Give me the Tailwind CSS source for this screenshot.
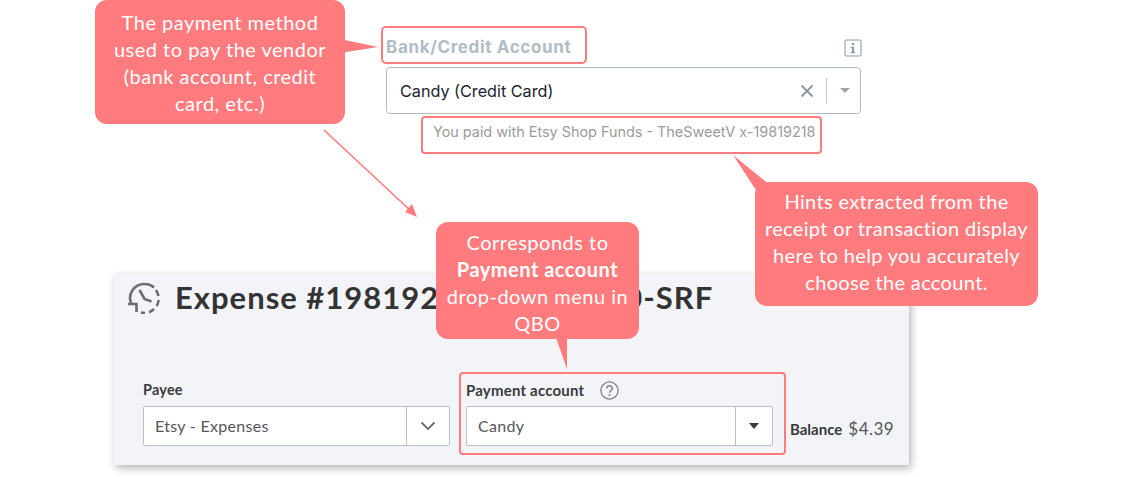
<!DOCTYPE html>
<html lang="en">
<head>
    <meta charset="UTF-8">
    <title>Bank/Credit Account</title>
    <script src="https://cdn.jsdelivr.net/npm/@tailwindcss/browser@4"></script>
</head>
<body class="bg-white">
    <div class="relative w-[1133px] h-[477px] overflow-hidden bg-white font-['Lato',sans-serif]">

        <!-- form from the app -->
        <div class="pt-[26px] ml-[386px] w-[475px] font-['Inter',sans-serif]">
            <div class="flex justify-between items-end h-[38px]">
                <div class="-ml-[5px] w-[206px] h-[38px] border-2 border-[#ff7b7e] rounded-[5px] pl-[3px] pt-[6px] flex items-center text-[17px] font-bold tracking-[0.65px] text-[#b1bdc3] whitespace-nowrap">Bank/Credit Account</div>
                <svg class="mb-[7px] mr-[-1px]" width="18" height="18" viewBox="0 0 18 18" fill="none">
                    <rect x="1" y="1" width="16" height="16" rx="2" stroke="#b1bdc3" stroke-width="1.6"/>
                    <rect x="7.8" y="3.8" width="2.4" height="2.4" fill="#8f9da4"/>
                    <path d="M6.8 7.8h3.2v5h1.2v1.4H6.8v-1.4H8V9.2H6.8z" fill="#8f9da4"/>
                </svg>
            </div>
            <div class="mt-[3px] h-[47px] border border-[#b1bdc1] rounded-[4px] flex items-center pl-[13px] text-[16.2px] text-[#1c2430]">
                <span class="flex-1 pt-[2px]">Candy (Credit Card)</span>
                <svg width="14" height="14" viewBox="0 0 14 14" fill="none"><path d="M1.5 1.5l11 11M12.5 1.5l-11 11" stroke="#8a969c" stroke-width="1.8"/></svg>
                <div class="ml-[12px] w-px h-[25px] bg-[#c3cbcf]"></div>
                <div class="ml-[13px] mr-[10px] w-0 h-0 border-x-[5px] border-x-transparent border-t-[5px] border-t-[#9aa5aa]"></div>
            </div>
            <div class="mt-[2px] ml-[35px] w-[401px] h-[38px] border-2 border-[#ff7b7e] rounded-[4px] pl-[10px] pb-[7px] flex items-center text-[14.4px] text-[#9b9b9b] whitespace-nowrap">You paid with Etsy Shop Funds - TheSweetV x-19819218</div>
        </div>

        <!-- QBO card -->
        <div class="mt-[120px] ml-[114px] w-[795px] h-[191px] bg-[#f3f4f8] shadow-[2px_3px_8px_rgba(0,0,0,0.3)] pl-[29px]">
            <div class="flex items-center h-[48px] -ml-[15px]">
                <svg width="32" height="32" viewBox="0 0 32 32" fill="none" stroke="#6b6c72" stroke-width="2.6">
                    <path d="M3.5 22A14 14 0 0 1 17 2a14 14 0 0 1 9 3.4"/>
                    <path d="M28 8a14 14 0 0 1 2.4 6M30.6 18a14 14 0 0 1-2 6M26 27a14 14 0 0 1-5 3.2M17 31l-4-.4"/>
                    <path d="M11.5 8l5 9 7 2.4"/>
                    <path d="M0 22h8.5v8" stroke-width="2.6"/>
                </svg>
                <h1 class="ml-[15px] -mt-[2px] text-[31px] font-bold tracking-[1px] text-[#333] whitespace-nowrap flex">
                    <span>Expense #198192</span>
                    <span class="ml-[185px]">0-SRF</span>
                </h1>
            </div>
            <div class="flex items-start mt-[49px]">
                <div class="w-[307px] pt-[11px]">
                    <div class="h-[16px] flex items-center text-[14.5px] font-bold tracking-[0.2px] text-[#393a3d]">Payee</div>
                    <div class="mt-[8px] h-[40px] bg-white border border-[#babec5] rounded-[2px] flex text-[16px] text-[#55565a] tracking-[0.3px]">
                        <span class="flex-1 pl-[11px] flex items-center">Etsy - Expenses</span>
                        <div class="w-[43px] border-l border-[#babec5] flex items-center justify-center">
                            <svg width="16" height="10" viewBox="0 0 16 10" fill="none"><path d="M1.5 1.5L8 8l6.5-6.5" stroke="#6b6c72" stroke-width="1.8"/></svg>
                        </div>
                    </div>
                </div>
                <div class="ml-[9px] mt-[1px] w-[327px] h-[83px] border-2 border-[#ff7b7e] rounded-[4px] pl-[5px] pt-[5px]">
                    <div class="h-[22px] flex items-center text-[15px] font-bold tracking-[0.2px] text-[#393a3d]">
                        Payment account
                        <svg class="ml-[16px]" width="19" height="19" viewBox="0 0 19 19" fill="none">
                            <circle cx="9.5" cy="9.5" r="8.6" stroke="#808185" stroke-width="1.3"/>
                            <path d="M6.8 7.4a2.7 2.7 0 1 1 4 2.4c-.9.5-1.3 1-1.3 2" stroke="#808185" stroke-width="1.4"/>
                            <circle cx="9.5" cy="14" r="1" fill="#808185"/>
                        </svg>
                    </div>
                    <div class="mt-[5px] w-[307px] h-[40px] bg-white border border-[#babec5] rounded-[2px] flex text-[16px] text-[#55565a] tracking-[0.3px]">
                        <span class="flex-1 pl-[11px] flex items-center">Candy</span>
                        <div class="w-[37px] border-l border-[#babec5] flex items-center justify-center">
                            <div class="w-0 h-0 border-x-[5px] border-x-transparent border-t-[6px] border-t-[#393a3d]"></div>
                        </div>
                    </div>
                </div>
                <div class="ml-[4px] mt-[45px] text-[#393a3d] whitespace-nowrap flex items-baseline gap-[6px]">
                    <span class="text-[15px] font-bold">Balance</span>
                    <span class="text-[17px] text-[#55565a] tracking-[0.5px]">$4.39</span>
                </div>
            </div>
        </div>

        <!-- callouts laid over the screenshots -->
        <svg class="absolute inset-0 pointer-events-none" width="1133" height="477" viewBox="0 0 1133 477" fill="#ff7b7e">
            <path d="M340 39L378 47L340 53z"/>
            <path d="M733 155L770 185L756 190z"/>
            <path d="M555 335H567V369z"/>
            <path d="M324 130L412 212" stroke="#ff7b7e" stroke-width="1.6" fill="none"/>
            <path d="M417 217L405 212L412 204z"/>
        </svg>
        <div class="absolute left-[95px] top-0 w-[250px] h-[124px] rounded-[12px] bg-[#ff7b7e] pt-[9px] text-center text-white text-[20px] leading-[27px] tracking-[0.5px]">The payment method<br>used to pay the vendor<br>(bank account, credit<br>card, etc.)</div>
        <div class="absolute left-[755px] top-[182px] w-[283px] h-[124px] rounded-[12px] bg-[#ff7b7e] pt-[6px] text-center text-white text-[20px] leading-[27px] tracking-[0.35px]">Hints extracted from the<br>receipt or transaction display<br>here to help you accurately<br>choose the account.</div>
        <div class="absolute left-[436px] top-[222px] w-[203px] h-[117px] rounded-[12px] bg-[#ff7b7e] pt-[7px] text-center text-white text-[20px] leading-[27px] tracking-[0.5px]">Corresponds to<br><b>Payment account</b><br>drop-down menu in<br>QBO</div>
    </div>
</body>
</html>
